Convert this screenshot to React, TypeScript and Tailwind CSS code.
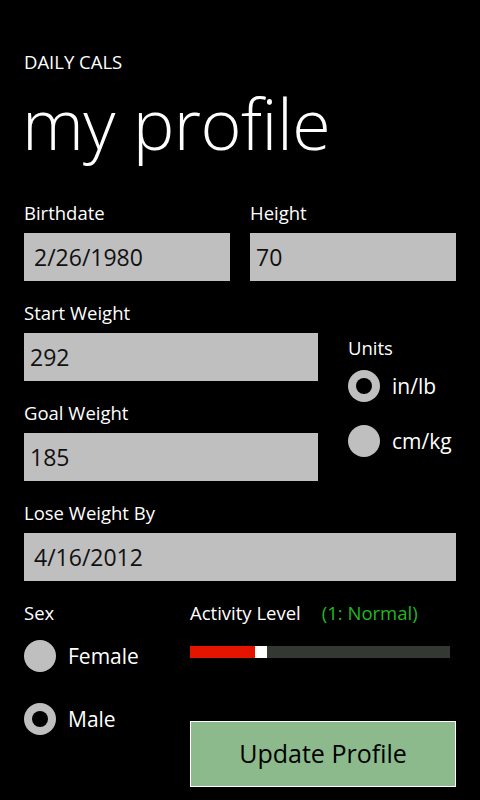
import React from "react";

const font = { fontFamily: '"Open Sans", "Noto Sans", sans-serif' };

function Radio({ checked, label }: { checked: boolean; label: string }) {
  return (
    <div className="flex items-center gap-3 h-8">
      <div className="w-8 h-8 rounded-full bg-[#bfbfbf] flex items-center justify-center">
        {checked && <div className="w-4 h-4 rounded-full bg-black" />}
      </div>
      <span className="text-[21px] text-white leading-none">{label}</span>
    </div>
  );
}

function Field({ label, value, pad = "pl-[10px]" }: { label: string; value: string; pad?: string }) {
  return (
    <div className="flex flex-col">
      <div className="text-[18.5px] leading-[24px] text-white mb-2">{label}</div>
      <div className={`h-12 bg-[#bfbfbf] flex items-center ${pad} text-[23px] text-[#111]`}>{value}</div>
    </div>
  );
}

export default function App() {
  return (
    <div className="w-[480px] h-[800px] bg-black text-white overflow-hidden px-6" style={font}>
      <div className="pt-[52px] text-[18.5px] leading-[20px]">DAILY CALS</div>
      <div className="text-[70px] font-light leading-[92px] mt-[5px] -ml-[2px] tracking-[-0.5px]">my profile</div>
      <div className="mt-[32px] grid grid-cols-2 gap-x-5">
        <Field label="Birthdate" value="2/26/1980" />
        <Field label="Height" value="70" pad="pl-[6px]" />
      </div>
      <div className="mt-5 flex gap-[30px]">
        <div className="w-[294px] flex flex-col gap-5">
          <Field label="Start Weight" value="292" pad="pl-[6px]" />
          <Field label="Goal Weight" value="185" pad="pl-[6px]" />
        </div>
        <div className="flex flex-col pt-[35px]">
          <div className="text-[18.5px] leading-[24px]">Units</div>
          <div className="mt-[10px] flex flex-col gap-[23px]">
            <Radio checked label="in/lb" />
            <Radio checked={false} label="cm/kg" />
          </div>
        </div>
      </div>
      <div className="mt-5">
        <Field label="Lose Weight By" value="4/16/2012" />
      </div>
      <div className="mt-5 flex">
        <div className="w-[166px] flex flex-col">
          <div className="text-[18.5px] leading-[24px]">Sex</div>
          <div className="mt-[15px] flex flex-col gap-[31px]">
            <Radio checked={false} label="Female" />
            <Radio checked label="Male" />
          </div>
        </div>
        <div className="flex-1 flex flex-col">
          <div className="flex text-[18.5px] leading-[24px]">
            <span>Activity Level</span>
            <span className="ml-[21px] text-[#1fba1f]">(1: Normal)</span>
          </div>
          <div className="mt-[21px] flex h-3 w-[260px]">
            <div className="w-[65px] bg-[#e51400]" />
            <div className="w-3 bg-white" />
            <div className="flex-1 bg-[#333833]" />
          </div>
          <div className="mt-[63px] h-[66px] border border-white bg-[#8cba8c] flex items-center justify-center text-[25px] text-black">
            Update Profile
          </div>
        </div>
      </div>
    </div>
  );
}
